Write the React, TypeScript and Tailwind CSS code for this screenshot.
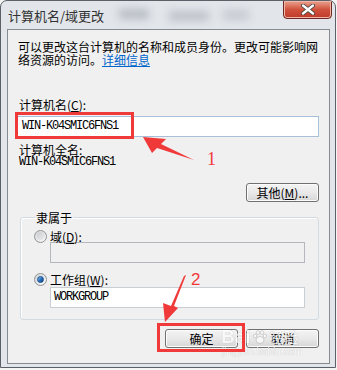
const cjk = { fontFamily: '"Noto Sans CJK SC", "Liberation Sans", sans-serif' };
const mono = { fontFamily: '"Liberation Mono", monospace' };

function Radio({ checked }: { checked?: boolean }) {
  return (
    <div className="w-[13px] h-[13px] rounded-full border border-[#8f9296] bg-gradient-to-br from-[#d4d6d8] to-[#fbfbfb] flex items-center justify-center shrink-0">
      <div
        className={
          checked
            ? "w-[7px] h-[7px] rounded-full bg-gradient-to-br from-[#8cc6f0] via-[#2a74c0] to-[#0d3f7a] border border-[#1b4f8a]"
            : "w-[8px] h-[8px] rounded-full bg-gradient-to-br from-[#c9cbce] to-[#eeeff0]"
        }
      />
    </div>
  );
}

function Btn({ children }: { children: React.ReactNode }) {
  return (
    <div className="w-[73px] h-[19px] rounded-[3px] border border-[#707070] bg-gradient-to-b from-[#f4f4f4] via-[#e9e9e9] to-[#d6d6d6] flex items-center justify-center text-[12px] leading-[13px] text-black shadow-[inset_0_0_0_1px_#fcfcfc]">
      {children}
    </div>
  );
}

export default function App() {
  return (
    <div className="relative w-[337px] h-[370px] bg-[#f4f4f4] overflow-hidden" style={cjk}>
      {/* window */}
      <div className="relative w-[336px] h-[368px] border border-[#5b6169] rounded-t-[7px] bg-[#e2e6eb] flex flex-col overflow-hidden">
        {/* blurred aero background */}
        <div className="absolute left-[118px] top-[8px] w-[30px] h-[10px] bg-[#9aa0a8] blur-[4px] opacity-60" />
        <div className="absolute left-[168px] top-[10px] w-[40px] h-[10px] bg-[#9aa0a8] blur-[4px] opacity-50" />
        <div className="absolute left-[222px] top-[9px] w-[26px] h-[10px] bg-[#9aa0a8] blur-[4px] opacity-40" />
        {/* title bar */}
        <div className="relative h-[28px] flex items-start justify-between">
          <div className="ml-[7px] mt-[7px] text-[13px] leading-[16px] text-[#333333]">计算机名/域更改</div>
          <div className="mr-[3px] -mt-[1px] w-[49px] h-[19px] rounded-b-[4px] border border-[#6e2a22] bg-gradient-to-b from-[#e8a190] via-[#d0523c] to-[#c0392a] flex items-center justify-center shadow-[inset_0_0_0_1px_#f0b7a8]">
            <svg width="14" height="11" viewBox="0 0 14 11">
              <path d="M2 1.5 L12 9.5 M12 1.5 L2 9.5" stroke="#3d3d3d" strokeWidth="4" strokeLinecap="round" />
              <path d="M2 1.5 L12 9.5 M12 1.5 L2 9.5" stroke="#ffffff" strokeWidth="2.4" strokeLinecap="round" />
            </svg>
          </div>
        </div>
        {/* client area */}
        <div className="ml-[6px] w-[323px] h-[335px] border border-[#868b92] bg-[#f0f0f0] pl-[9px] pr-[10px] flex flex-col text-black">
          <div className="mt-[10px] ml-[1px] text-[12px] leading-[13px]">
            <div>可以更改这台计算机的名称和成员身份。更改可能影响网</div>
            <div>
              络资源的访问。<span className="text-[#0066cc] underline">详细信息</span>
            </div>
          </div>
          <div className="mt-[32px] ml-[2px] text-[12px] leading-[13px]">
            计算机名(<span className="underline">C</span>):
          </div>
          <div className="mt-[5px] h-[21px] border border-[#a7bfd8] bg-white flex items-center pl-[4px]">
            <span className="text-[12px] leading-[13px] tracking-[-1.2px]" style={mono}>WIN-K04SMIC6FNS1</span>
          </div>
          <div className="mt-[6px] ml-[2px] text-[12px] leading-[13px]">计算机全名:</div>
          <div className="ml-[2px] text-[12px] leading-[13px] tracking-[-1.2px]" style={mono}>WIN-K04SMIC6FNS1</div>
          <div className="mt-[14px] self-end">
            <Btn>
              其他(<span className="underline">M</span>)...
            </Btn>
          </div>
          <fieldset className="mt-[9px] ml-[3px] border border-[#d3dbe2] rounded-[3px] pl-[13px] pr-[13px] pb-[11px] shadow-[inset_1px_1px_0_#ffffff]">
            <legend className="ml-[1px] px-[1px] text-[12px] leading-[13px]">隶属于</legend>
            <div className="mt-[6px] h-[12px] flex items-center gap-[3px]">
              <Radio />
              <span className="text-[12px] leading-[13px]">
                域(<span className="underline">D</span>):
              </span>
            </div>
            <div className="ml-[16px] h-[21px] border border-[#b4b8bc] bg-[#f0f0f0]" />
            <div className="mt-[10px] h-[12px] flex items-center gap-[3px]">
              <Radio checked />
              <span className="text-[12px] leading-[13px]">
                工作组(<span className="underline">W</span>):
              </span>
            </div>
            <div className="mt-[2px] ml-[16px] h-[21px] border border-[#c9ced3] bg-white flex items-center pl-[3px]">
              <span className="text-[12px] leading-[13px] tracking-[-1.2px]" style={mono}>WORKGROUP</span>
            </div>
          </fieldset>
          <div className="mt-[9px] flex justify-end gap-[8px]">
            <Btn>确定</Btn>
            <Btn>取消</Btn>
          </div>
        </div>
      </div>

      {/* watermark */}
      <div className="absolute left-[221px] top-[327px] flex items-center gap-[1px] text-white opacity-70 [text-shadow:0_0_1px_#8a8a8a]">
        <span className="text-[19px] leading-[20px] font-bold" style={{ fontFamily: '"Liberation Sans", sans-serif' }}>Bai</span>
        <svg width="16" height="16" viewBox="0 0 16 16">
          <g fill="#ffffff" stroke="#9a9a9a" strokeWidth="0.6">
            <ellipse cx="8" cy="11" rx="4" ry="3.5" />
            <ellipse cx="3" cy="7" rx="1.6" ry="2" />
            <ellipse cx="6" cy="3.5" rx="1.6" ry="2" />
            <ellipse cx="10" cy="3.5" rx="1.6" ry="2" />
            <ellipse cx="13" cy="7" rx="1.6" ry="2" />
          </g>
        </svg>
        <span className="text-[15px] leading-[20px]">经验</span>
      </div>
      <div className="absolute left-[222px] top-[347px] text-[10px] leading-[10px] text-white opacity-70 [text-shadow:0_0_1px_#8a8a8a]" style={{ fontFamily: '"Liberation Sans", sans-serif' }}>
        jingyan.baidu.com
      </div>

      {/* annotations */}
      <div className="absolute left-[15px] top-[112px] w-[119px] h-[27px] border-[3px] border-[#f03a3a]" />
      <div className="absolute left-[157px] top-[323px] w-[88px] h-[29px] border-[3px] border-[#f03a3a]" />
      <svg className="absolute left-0 top-0" width="337" height="370" viewBox="0 0 337 370">
        <polygon points="143,137 166,139 161,144 194,160 157,148 152,153" fill="#f03a3a" />
        <polygon points="186,275 184,276 171,306 163,303 165,322 178,308 174,306" fill="#f03a3a" />
      </svg>
      <div className="absolute left-[207px] top-[150px] text-[18px] leading-[18px] text-[#f03a3a]" style={{ fontFamily: '"Liberation Serif", serif' }}>1</div>
      <div className="absolute left-[191px] top-[271px] text-[17px] leading-[18px] text-[#f03a3a]" style={{ fontFamily: '"Liberation Sans", sans-serif' }}>2</div>
    </div>
  );
}
